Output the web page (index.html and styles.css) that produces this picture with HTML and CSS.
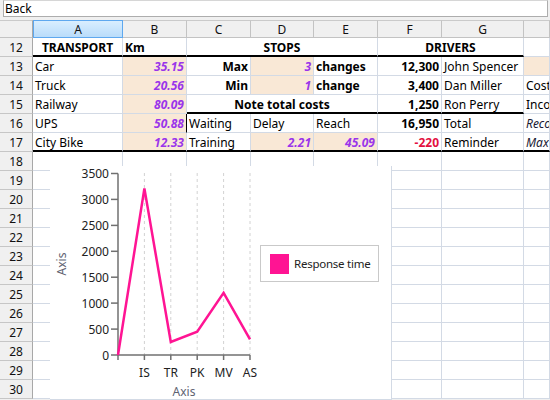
FILE: index.html
```html
<!DOCTYPE html>
<html>
<head>
<meta charset="utf-8">
<link rel="stylesheet" href="styles.css">
</head>
<body>
<div class="formula"><div class="formula-input">Back</div></div>
<div class="sheet">
  <div class="hd corner"></div><div class="hd sel">A</div><div class="hd">B</div><div class="hd">C</div><div class="hd">D</div><div class="hd">E</div><div class="hd">F</div><div class="hd">G</div><div class="hd"></div>

  <div class="rh">12</div><div class="b ctr tb">TRANSPORT</div><div class="b tb">Km</div><div class="b ctr tb span3">STOPS</div><div class="b ctr tb span2">DRIVERS</div><div></div>

  <div class="rh">13</div><div>Car</div><div class="bg num">35.15</div><div class="b r">Max</div><div class="bg num">3</div><div class="b">changes</div><div class="b r">12,300</div><div>John Spencer</div><div class="bg"></div>

  <div class="rh">14</div><div>Truck</div><div class="bg num">20.56</div><div class="b r">Min</div><div class="bg num">1</div><div class="b">change</div><div class="b r">3,400</div><div>Dan Miller</div><div>Cost</div>

  <div class="rh">15</div><div>Railway</div><div class="bg num">80.09</div><div class="b ctr tb span3">Note total costs</div><div class="b r tb">1,250</div><div class="tb">Ron Perry</div><div>Inco</div>

  <div class="rh">16</div><div>UPS</div><div class="bg num tr">50.88</div><div>Waiting</div><div>Delay</div><div>Reach</div><div class="b r">16,950</div><div>Total</div><div class="it">Reco</div>

  <div class="rh">17</div><div class="tb">City Bike</div><div class="bg num tb">12.33</div><div class="tb">Training</div><div class="bg num tb">2.21</div><div class="bg num tb">45.09</div><div class="b r red tb">-220</div><div class="tb">Reminder</div><div class="it tb">Max</div>

  <div class="rh">18</div><div></div><div></div><div></div><div></div><div></div><div></div><div></div><div></div>
  <div class="rh">19</div><div></div><div></div><div></div><div></div><div></div><div></div><div></div><div></div>
  <div class="rh">20</div><div></div><div></div><div></div><div></div><div></div><div></div><div></div><div></div>
  <div class="rh">21</div><div></div><div></div><div></div><div></div><div></div><div></div><div></div><div></div>
  <div class="rh">22</div><div></div><div></div><div></div><div></div><div></div><div></div><div></div><div></div>
  <div class="rh">23</div><div></div><div></div><div></div><div></div><div></div><div></div><div></div><div></div>
  <div class="rh">24</div><div></div><div></div><div></div><div></div><div></div><div></div><div></div><div></div>
  <div class="rh">25</div><div></div><div></div><div></div><div></div><div></div><div></div><div></div><div></div>
  <div class="rh">26</div><div></div><div></div><div></div><div></div><div></div><div></div><div></div><div></div>
  <div class="rh">27</div><div></div><div></div><div></div><div></div><div></div><div></div><div></div><div></div>
  <div class="rh">28</div><div></div><div></div><div></div><div></div><div></div><div></div><div></div><div></div>
  <div class="rh">29</div><div></div><div></div><div></div><div></div><div></div><div></div><div></div><div></div>
  <div class="rh">30</div><div></div><div></div><div></div><div></div><div></div><div></div><div></div><div></div>

  <div class="chart">
    <svg width="342" height="234" viewBox="0 0 342 234">
      <g class="grid-v">
        <line x1="92.4" y1="6" x2="92.4" y2="188"/>
        <line x1="118.8" y1="6" x2="118.8" y2="188"/>
        <line x1="145.2" y1="6" x2="145.2" y2="188"/>
        <line x1="171.6" y1="6" x2="171.6" y2="188"/>
        <line x1="198" y1="6" x2="198" y2="188"/>
      </g>
      <g class="axis">
        <line x1="66" y1="6.5" x2="66" y2="193"/>
        <line x1="66" y1="188" x2="198" y2="188"/>
        <line x1="59" y1="6.5" x2="66" y2="6.5"/>
        <line x1="59" y1="32.4" x2="66" y2="32.4"/>
        <line x1="59" y1="58.4" x2="66" y2="58.4"/>
        <line x1="59" y1="84.3" x2="66" y2="84.3"/>
        <line x1="59" y1="110.2" x2="66" y2="110.2"/>
        <line x1="59" y1="136.1" x2="66" y2="136.1"/>
        <line x1="59" y1="162.1" x2="66" y2="162.1"/>
        <line x1="59" y1="188" x2="66" y2="188"/>
        <line x1="92.4" y1="188" x2="92.4" y2="193"/>
        <line x1="118.8" y1="188" x2="118.8" y2="193"/>
        <line x1="145.2" y1="188" x2="145.2" y2="193"/>
        <line x1="171.6" y1="188" x2="171.6" y2="193"/>
        <line x1="198" y1="188" x2="198" y2="193"/>
      </g>
      <g class="ticks-y">
        <text x="57" y="11">3500</text>
        <text x="57" y="36.9">3000</text>
        <text x="57" y="62.9">2500</text>
        <text x="57" y="88.8">2000</text>
        <text x="57" y="114.7">1500</text>
        <text x="57" y="140.6">1000</text>
        <text x="57" y="166.6">500</text>
        <text x="57" y="192.5">0</text>
      </g>
      <g class="ticks-x">
        <text x="92.4" y="210">IS</text>
        <text x="118.8" y="210">TR</text>
        <text x="145.2" y="210">PK</text>
        <text x="171.6" y="210">MV</text>
        <text x="198" y="210">AS</text>
      </g>
      <text class="title" x="132" y="229">Axis</text>
      <text class="title" x="0" y="0" transform="translate(14 97) rotate(-90)">Axis</text>
      <polyline class="series" points="66,188 92.4,21.5 118.8,175 145.2,164.7 171.6,125.8 198,172.4"/>
      <rect class="legend" x="208.5" y="78.5" width="118" height="36"/>
      <rect class="swatch" x="218" y="87" width="19" height="20"/>
      <text class="legend-text" x="242" y="101">Response time</text>
    </svg>
  </div>
</div>
</body>
</html>
```

FILE: styles.css
```css
body {
  margin: 0;
  width: 550px;
  height: 400px;
  overflow: hidden;
  background: #f0f0f0;
  font-family: "Noto Sans", "Open Sans", sans-serif;
  font-size: 12px;
  color: #000;
}

.formula {
  height: 20px;
  padding-left: 3px;
  box-sizing: border-box;
}

.formula-input {
  width: 545px;
  height: 17px;
  box-sizing: border-box;
  background: #fff;
  border: 1px solid #adadad;
  border-top-color: #d6d6d6;
  padding-left: 1px;
  line-height: 15px;
}

.sheet {
  position: relative;
  display: grid;
  grid-template-columns: 33px 90px 64px 64px 63px 64px 64px 82px 26px;
  grid-template-rows: 18px repeat(19, 19px);
  background: #fff;
}

.sheet > div {
  box-sizing: border-box;
  border-right: 1px solid #d3dae5;
  border-bottom: 1px solid #d3dae5;
  padding: 1px 2px 0;
  white-space: nowrap;
  overflow: hidden;
  line-height: 18px;
}

.sheet > .hd {
  background: #f0f0f0;
  border-top: 1px solid #cacaca;
  border-right-color: #c3c3c3;
  border-bottom-color: #c3c3c3;
  text-align: center;
  line-height: 16px;
  color: #111;
}

.sheet > .corner {
  border-right-color: #a8a8a8;
}

.sheet > .sel {
  background: linear-gradient(#d9eeff, #b9dcfa);
  border: 1px solid #5ea8ef;
  line-height: 16px;
}

.sheet > .rh {
  background: #f0f0f0;
  border-right-color: #a8a8a8;
  border-bottom-color: #c6c6c6;
  text-align: center;
  color: #111;
}

.sheet > .b { font-weight: bold; }
.sheet > .r { text-align: right; }
.sheet > .ctr { text-align: center; }
.sheet > .it { font-style: italic; color: #1a1a33; }
.sheet > .bg { background: #f9e8d6; }
.sheet > .num {
  text-align: right;
  font-weight: bold;
  font-style: italic;
  color: #9a35ea;
}
.sheet > .red { color: #e3103f; }

.sheet > .tb {
  border-bottom: 2px solid #000;
  line-height: 17px;
}

.sheet > .tr {
  border-right-color: #000;
}

.span3 { grid-column: span 3; }
.span2 { grid-column: span 2; }

.chart {
  position: absolute;
  left: 50px;
  top: 146px;
  width: 342px;
  height: 234px;
  background: #fff;
}

.chart svg {
  display: block;
  font-family: "Noto Sans", "Open Sans", sans-serif;
  font-size: 12px;
}

.grid-v line {
  stroke: #d2d2d2;
  stroke-width: 1;
  stroke-dasharray: 3 3;
}

.axis line {
  stroke: #707070;
  stroke-width: 1.5;
}

.ticks-y text {
  text-anchor: end;
  fill: #222;
}

.ticks-x text {
  text-anchor: middle;
  fill: #222;
}

.title {
  text-anchor: middle;
  fill: #5f6372;
}

.series {
  fill: none;
  stroke: #ff1493;
  stroke-width: 2.5;
  stroke-linejoin: miter;
}

.legend {
  fill: #fff;
  stroke: #c9c9c9;
  stroke-width: 1;
}

.swatch { fill: #ff1493; }

.legend-text {
  fill: #222;
  font-size: 11.5px;
  letter-spacing: -0.25px;
}
```
